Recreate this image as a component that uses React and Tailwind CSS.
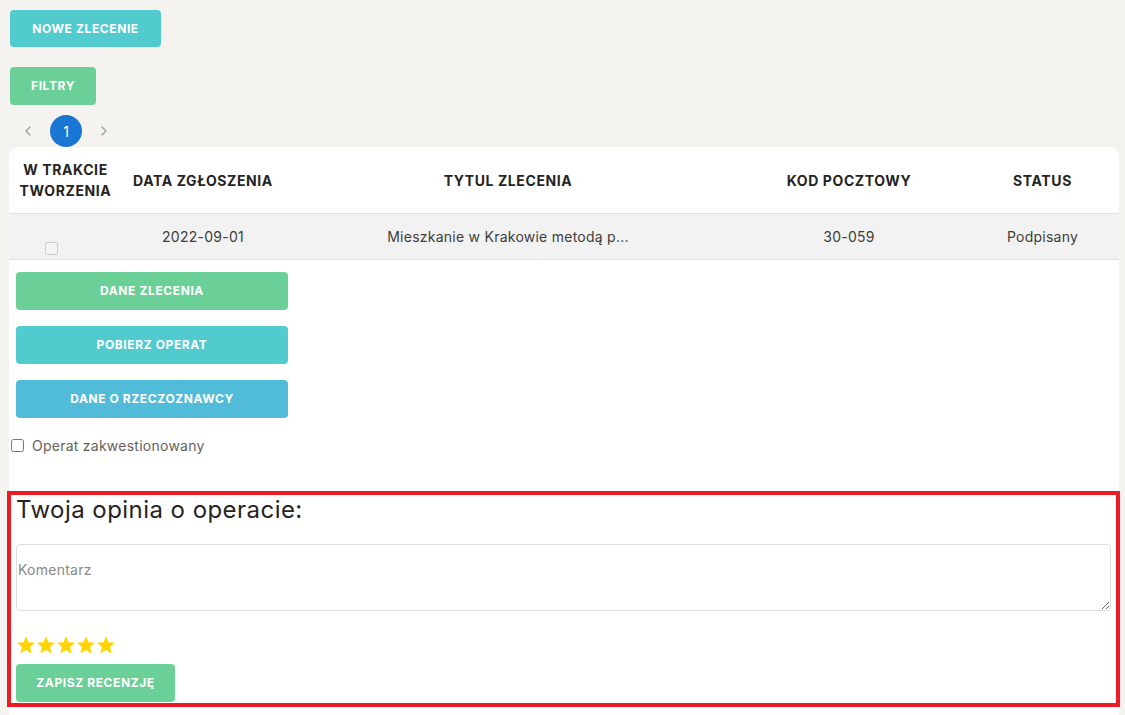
import { ChevronLeft, ChevronRight } from 'lucide-react'

const font = { fontFamily: '"Inter", "DejaVu Sans", sans-serif' }

const Star = () => (
    <svg viewBox="2 2 20 19.3" className="w-[18px] h-[18px]" fill="#ffd400">
        <path d="M12 17.27 18.18 21l-1.64-7.03L22 9.24l-7.19-.61L12 2 9.19 8.63 2 9.24l5.46 4.73L5.82 21z" />
    </svg>
)

const btn = "rounded-[4px] text-white text-[12px] font-bold uppercase tracking-[0.6px]"

const App = () => {
    return (
        <div className="min-h-[715px] w-full bg-[#f4f3ef] pl-[9px] pr-[6px] pt-[10px] flex flex-col" style={font}>
            <button className={`ml-px w-[151px] h-[37px] bg-[#51cbce] ${btn}`}>
                Nowe zlecenie
            </button>
            <button className={`ml-px mt-[20px] w-[86px] h-[38px] bg-[#6bd098] ${btn}`}>
                Filtry
            </button>

            <div className="flex items-center h-[32px] mt-[10px] ml-[11px] gap-[14px]">
                <div className="w-[16px] flex justify-center text-[#9e9e9e]"><ChevronLeft size={16} strokeWidth={2} /></div>
                <div className="w-[32px] h-[32px] rounded-full bg-[#1976d2] text-white text-[14px] flex items-center justify-center">1</div>
                <div className="w-[16px] flex justify-center text-[#9e9e9e]"><ChevronRight size={16} strokeWidth={2} /></div>
            </div>

            <div className="flex-1 bg-white rounded-t-[10px] flex flex-col">
                <div className="grid grid-cols-[113px_162px_448px_234px_1fr] border-b border-[#dee2e6] text-[#252422] text-[14px] font-bold uppercase tracking-[0.6px] leading-[21px] text-center items-center py-[12px]">
                    <div>W trakcie<br />tworzenia</div>
                    <div>Data zgłoszenia</div>
                    <div>Tytul zlecenia</div>
                    <div>Kod pocztowy</div>
                    <div>Status</div>
                </div>
                <div className="grid grid-cols-[113px_162px_448px_234px_1fr] h-[46px] bg-[#f2f2f2] border-b border-[#dee2e6] text-[#403d39] text-[14px] tracking-[0.25px] text-center items-center">
                    <div className="flex pl-[36px] pt-[23px]">
                        <input type="checkbox" disabled className="m-0 w-[13px] h-[13px]" />
                    </div>
                    <div>2022-09-01</div>
                    <div>Mieszkanie w Krakowie metodą p...</div>
                    <div>30-059</div>
                    <div>Podpisany</div>
                </div>

                <div className="flex flex-col gap-[16px] pl-[7px] pt-[12px]">
                    <button className={`w-[272px] h-[38px] bg-[#6bd098] ${btn}`}>Dane zlecenia</button>
                    <button className={`w-[272px] h-[38px] bg-[#51cbce] ${btn}`}>Pobierz operat</button>
                    <button className={`w-[272px] h-[38px] bg-[#51bcda] ${btn}`}>Dane o rzeczoznawcy</button>
                </div>

                <label className="flex items-center gap-[8px] mt-[18px] ml-[2px] h-[18px] text-[14px] tracking-[0.25px] text-[#66615b]">
                    <input type="checkbox" className="m-0 w-[13px] h-[13px]" />
                    Operat zakwestionowany
                </label>

                <div className="mt-[37px] -ml-[2px] w-[1113px] border-4 border-[#ed1c24] px-[5px] pb-px flex flex-col">
                    <h3 className="text-[24px] leading-[29px] font-normal tracking-[0.45px] text-[#252422]">Twoja opinia o operacie:</h3>
                    <textarea
                        placeholder="Komentarz"
                        className="mt-[20px] h-[67px] w-full border border-[#dddddd] rounded-[4px] px-px pt-[14px] text-[14px] tracking-[0.25px] text-[#66615b] placeholder:text-[#8a8a8a] outline-none"
                    />
                    <div className="flex gap-[2px] mt-[24px] ml-px h-[20px] items-center">
                        <Star /><Star /><Star /><Star /><Star />
                    </div>
                    <button className={`mt-[9px] w-[159px] h-[38px] bg-[#6bd098] ${btn}`}>
                        Zapisz recenzję
                    </button>
                </div>
                <div className="h-[9px]" />
            </div>
        </div>
    )
}

export default App
